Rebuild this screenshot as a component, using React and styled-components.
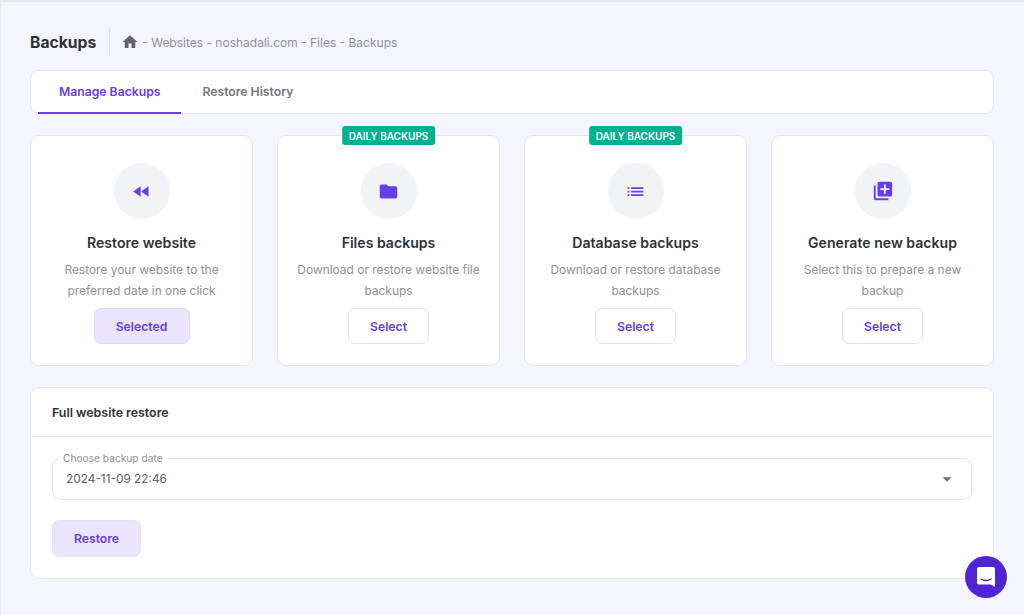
import React from 'react'
import styled, { createGlobalStyle } from 'styled-components'
import { MdFastRewind, MdFolder, MdList, MdLibraryAdd, MdHome, MdArrowDropDown } from 'react-icons/md'

const Global = createGlobalStyle`
  html, body { margin: 0; padding: 0; }
  body {
    width: 1024px;
    height: 615px;
    overflow: hidden;
    background: #f4f5ff;
    font-family: Inter, "Liberation Sans", sans-serif;
  }
`
const Page = styled.div`
  box-sizing: border-box;
  width: 1024px;
  height: 615px;
  padding: 26px 30px 0 29px;
  border-top: 2px solid #e6e7ee;
  border-left: 1px solid #e6e7ee;
  display: flex;
  flex-direction: column;
`
const Header = styled.div`
  display: flex;
  align-items: center;
  height: 28px;
`
const Title = styled.h1`
  margin: 0;
  padding-right: 13px;
  height: 28px;
  line-height: 30px;
  border-right: 1px solid #dfe0e8;
  font-size: 15.7px;
  font-weight: 650;
  color: #2f3137;
`
const Crumbs = styled.div`
  display: flex;
  align-items: center;
  margin-left: 11px;
  font-size: 12px;
  color: #909199;
  svg { color: #62646f; margin-right: 3px; }
`
const Tabs = styled.div`
  box-sizing: border-box;
  margin-top: 14px;
  height: 44px;
  padding-left: 7px;
  display: flex;
  background: #fff;
  border: 1px solid #e6e7ee;
  border-radius: 9px;
`
const Tab = styled.div`
  box-sizing: border-box;
  height: 43px;
  padding: 0 21px;
  display: flex;
  align-items: center;
  font-size: 12.2px;
  font-weight: 600;
  color: ${p => (p.$active ? '#673de6' : '#72747f')};
  border-bottom: 2px solid ${p => (p.$active ? '#673de6' : 'transparent')};
`
const Cards = styled.div`
  margin-top: 21px;
  display: grid;
  grid-template-columns: repeat(4, 223px);
  column-gap: 24px;
`
const Card = styled.div`
  box-sizing: border-box;
  position: relative;
  height: 231px;
  padding: 27px 16px 0;
  display: flex;
  flex-direction: column;
  align-items: center;
  background: #fff;
  border: 1px solid #e6e7ee;
  border-radius: 9px;
  text-align: center;
`
const Badge = styled.span`
  position: absolute;
  top: -10px;
  left: 50%;
  transform: translateX(-50%);
  height: 19px;
  padding: 0 7px;
  display: flex;
  align-items: center;
  white-space: nowrap;
  background: #00b090;
  border-radius: 3px;
  color: #fff;
  font-size: 10px;
  font-weight: 600;
`
const IconCircle = styled.div`
  width: 56px;
  height: 56px;
  flex: none;
  display: flex;
  align-items: center;
  justify-content: center;
  border-radius: 50%;
  background: #f2f3f6;
  color: #673de6;
`
const CardTitle = styled.h2`
  margin: 14px 0 0;
  height: 20px;
  line-height: 20px;
  font-size: 14.1px;
  font-weight: 600;
  color: #2f3137;
  white-space: nowrap;
`
const CardText = styled.p`
  margin: 6px 0 0;
  width: 186px;
  line-height: 21px;
  font-size: 11.95px;
  color: #909199;
`
const PickButton = styled.button`
  box-sizing: border-box;
  margin-top: 7px;
  width: ${p => (p.$selected ? '96px' : '81px')};
  height: 36px;
  flex: none;
  padding: 0;
  font: inherit;
  font-size: 12.2px;
  font-weight: 600;
  color: #673de6;
  background: ${p => (p.$selected ? '#ebe4ff' : '#fff')};
  border: 1px solid ${p => (p.$selected ? '#e1dbf7' : '#e2e3ea')};
  border-radius: 7px;
`
const Panel = styled.div`
  box-sizing: border-box;
  margin-top: 21px;
  height: 192px;
  background: #fff;
  border: 1px solid #e6e7ee;
  border-radius: 9px;
`
const PanelHead = styled.div`
  box-sizing: border-box;
  height: 49px;
  padding-left: 21px;
  display: flex;
  align-items: center;
  border-bottom: 1px solid #e6e7ee;
  font-size: 12.4px;
  font-weight: 600;
  color: #2f3137;
`
const PanelBody = styled.div`
  padding: 21px 21px 0;
`
const SelectBox = styled.div`
  box-sizing: border-box;
  position: relative;
  height: 42px;
  padding: 0 13px;
  display: flex;
  align-items: center;
  justify-content: space-between;
  border: 1px solid #e2e3ea;
  border-radius: 9px;
  font-size: 11.85px;
  color: #5e606b;
  svg { color: #6d6f7c; }
`
const FieldLabel = styled.span`
  position: absolute;
  top: -7px;
  left: 5px;
  padding: 0 5px;
  background: #fff;
  font-size: 10.2px;
  line-height: 12px;
  color: #909199;
`
const RestoreButton = styled.button`
  box-sizing: border-box;
  display: block;
  margin-top: 20px;
  width: 89px;
  height: 37px;
  padding: 0;
  font: inherit;
  font-size: 12.2px;
  font-weight: 600;
  color: #673de6;
  background: #ebe4ff;
  border: 1px solid #e6e1f8;
  border-radius: 7px;
`
const Chat = styled.div`
  position: absolute;
  left: 965px;
  top: 556px;
  width: 42px;
  height: 42px;
  display: flex;
  align-items: center;
  justify-content: center;
  border-radius: 50%;
  background: #5025d1;
`

const cards = [
  { title: 'Restore website', text: 'Restore your website to the preferred date in one click', icon: <MdFastRewind size={21} />, selected: true },
  { title: 'Files backups', text: 'Download or restore website file backups', icon: <MdFolder size={21} />, badge: true },
  { title: 'Database backups', text: 'Download or restore database backups', icon: <MdList size={21} />, badge: true },
  { title: 'Generate new backup', text: 'Select this to prepare a new backup', icon: <MdLibraryAdd size={22} /> },
]

const App = () => {
  return (
    <Page>
      <Global />
      <Header>
        <Title>Backups</Title>
        <Crumbs><MdHome size={18} />- Websites - noshadali.com - Files - Backups</Crumbs>
      </Header>
      <Tabs>
        <Tab $active>Manage Backups</Tab>
        <Tab>Restore History</Tab>
      </Tabs>
      <Cards>
        {cards.map(c => (
          <Card key={c.title}>
            {c.badge ? <Badge>DAILY BACKUPS</Badge> : ''}
            <IconCircle>{c.icon}</IconCircle>
            <CardTitle>{c.title}</CardTitle>
            <CardText>{c.text}</CardText>
            <PickButton $selected={c.selected}>{c.selected ? 'Selected' : 'Select'}</PickButton>
          </Card>
        ))}
      </Cards>
      <Panel>
        <PanelHead>Full website restore</PanelHead>
        <PanelBody>
          <SelectBox>
            <FieldLabel>Choose backup date</FieldLabel>
            2024-11-09 22:46
            <MdArrowDropDown size={22} />
          </SelectBox>
          <RestoreButton>Restore</RestoreButton>
        </PanelBody>
      </Panel>
      <Chat>
        <svg width="20" height="22" viewBox="0 0 20 22">
          <path d="M3 1h14a2 2 0 0 1 2 2v18l-4-2.6H3a2 2 0 0 1-2-2V3a2 2 0 0 1 2-2z" fill="#fff" />
          <path d="M5 13c3 1.8 7 1.8 10 0" fill="none" stroke="#5025d1" strokeWidth="1.3" strokeLinecap="round" />
        </svg>
      </Chat>
    </Page>
  )
}

export default App
